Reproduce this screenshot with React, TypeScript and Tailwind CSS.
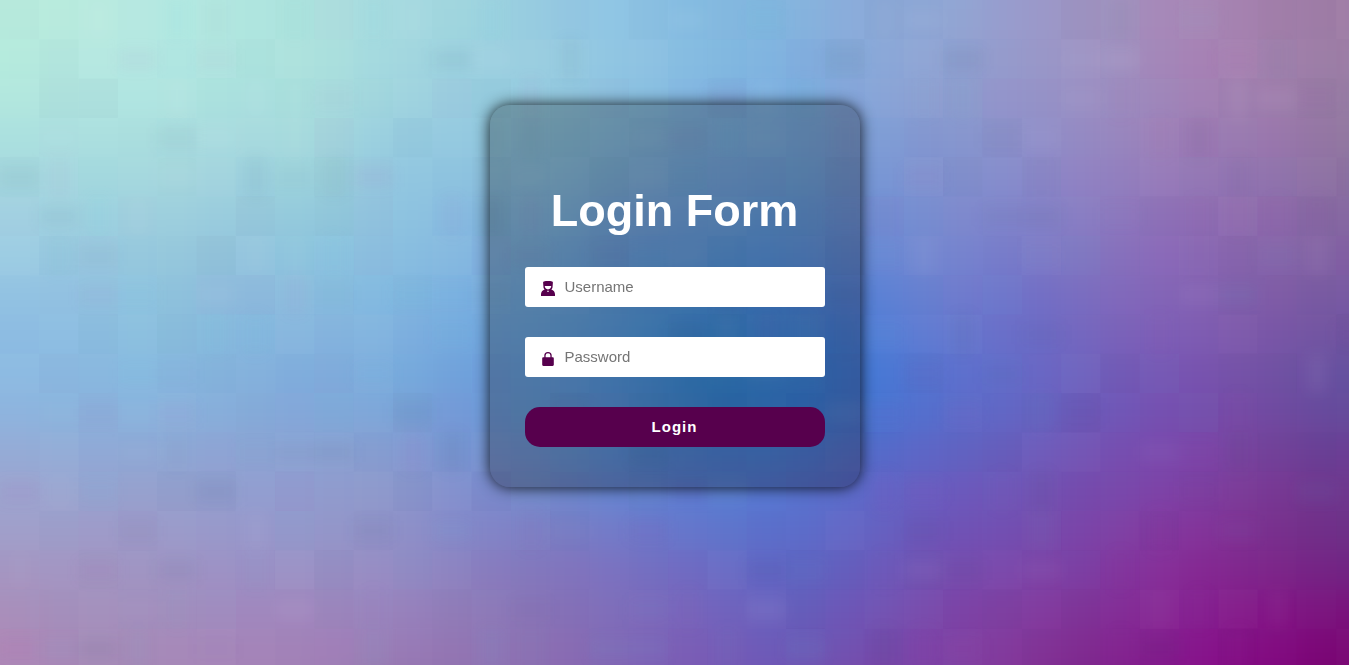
import React from "react";

/* Colour samples of the backdrop, one every two tiles in both directions. */
const SAMPLES: string[] = [
  "bdeee0 b9ecdc b6e9e2 b2e7e0 aee3de a7dae0 a3d7df 96c8e1 90c5e6 84bde0 82b5de 8cabd9 8ea8d6 9b9bcd a294bf a98bb8 a682ae 9f7aa4",
  "b6ecdc b4e7e2 b2e8e2 aee4df abe0dc a5d9df 99cfe0 9acfe0 8dc3e1 85b9e2 7aafe0 8aa9da 90a0d0 9798ca 9e90c2 a685b8 a580ae 997ea4",
  "a9dde0 a8dddf a8dbdd a4d7df a4d8dc 93c9e0 93c8e0 8dc4e2 82b8df 7aaee2 74aae0 7b9bd6 8494cf 8d8fcb 9588c2 9a7bb6 9876b0 8f749f",
  "a1d1e3 9dcde0 9accdd 96c7dd 90c8de 8cc2e0 86b8e1 7cb5e0 719fe2 679fe2 5d99e3 6d8ed6 7888ce 7d7fcb 8878bf 8e6ab8 8a68ab 8464a2",
  "8fbfe4 90c0e2 8ec3de 8abadf 88bade 82b6e0 75acdf 6aa6e2 589fe3 4494e4 4589e4 547fd8 6a7dd1 6c6dc8 7b68bc 8462b6 7e5aa8 7556a0",
  "8bb9e2 87b7e0 86b8e0 83afdb 7eaadd 76aadc 6e9cda 629ee0 5198e2 3089d5 3085e0 3f79d6 5570ce 636bc8 6d5bba 7550b2 7350a6 604f9e",
  "9aa6d2 94a8d4 93a4d2 91a2d2 8f9fd0 8c9acd 7b90d2 6f92d0 5d8bd8 5580d5 547bd5 5d6bc9 6561c3 6d58b8 774cae 7b46aa 7a3e98 6d3a90",
  "a09bc6 a299c6 9f98c6 9996ca 9694c8 928fc6 8583c4 8178c0 7674c4 666fc8 5c6bc8 6560c0 7350b4 774aad 7c40a4 8a3099 7b2c8c 6f2d86",
  "b089b5 a58fbb a58bb8 a586bc a384ba 9c80bb 9378b5 8b72b4 8068b8 7960b8 685dbb 7252b3 7c42a5 853a9d 842c94 861f90 861086 7c0a78",
  "ab88b8 a885b5 a585b5 a583b5 a080b5 9570a8 926fb0 8b66b0 7d5db2 7655b2 7250b2 7c40a2 7a40a5 842f94 7d1c88 850d8a 850080 700068",
];

type Rgb = [number, number, number];

const GRID: Rgb[][] = SAMPLES.map((row) =>
  row.split(" ").map((hex) => {
    const n = parseInt(hex, 16);
    return [n >> 16, (n >> 8) & 255, n & 255] as Rgb;
  }),
);

const TILE = 39.3;
const clamp = (v: number, max: number) => Math.min(Math.max(v, 0), max);

function colourAt(gx: number, gy: number): string {
  const x = clamp(gx, GRID[0].length - 1);
  const y = clamp(gy, GRID.length - 1);
  const x0 = Math.floor(x);
  const y0 = Math.floor(y);
  const x1 = clamp(x0 + 1, GRID[0].length - 1);
  const y1 = clamp(y0 + 1, GRID.length - 1);
  const mix = [0, 1, 2].map((i) => {
    const top = GRID[y0][x0][i] * (1 - (x - x0)) + GRID[y0][x1][i] * (x - x0);
    const low = GRID[y1][x0][i] * (1 - (x - x0)) + GRID[y1][x1][i] * (x - x0);
    return Math.round(top * (1 - (y - y0)) + low * (y - y0));
  });
  return `rgb(${mix.join(",")})`;
}

function noise(a: number, b: number, seed: number): number {
  const v = Math.sin(a * 127.1 + b * 311.7 + seed * 74.7) * 43758.5453;
  return v - Math.floor(v);
}

const TINTS = ["#ffffff", "#16365c", "#5fd0e0", "#b03fae"];

function Backdrop() {
  const base: React.ReactElement[] = [];
  const tiles: React.ReactElement[] = [];
  const smudges: React.ReactElement[] = [];
  for (let r = -2; r < 20; r++) {
    for (let c = -2; c < 37; c++) {
      base.push(
        <rect
          key={`${r}:${c}`}
          x={c * TILE}
          y={r * TILE}
          width={TILE + 1}
          height={TILE + 1}
          fill={colourAt((c + 0.5) / 2, (r + 0.5) / 2)}
        />,
      );
      if (r < 0 || c < 0 || r > 16 || c > 34) continue;
      tiles.push(
        <rect
          key={`${r}:${c}`}
          x={c * TILE}
          y={r * TILE}
          width={TILE}
          height={TILE}
          fill={TINTS[Math.floor(noise(c, r, 1) * 4)]}
          opacity={noise(c, r, 2) * 0.025}
        />,
      );
      if (noise(c, r, 3) > 0.6) {
        const tall = noise(c, r, 4) > 0.5;
        smudges.push(
          <rect
            key={`${r}:${c}`}
            x={c * TILE + (tall ? 10 : 0)}
            y={r * TILE + (tall ? 0 : 10)}
            width={tall ? 20 : TILE}
            height={tall ? TILE : 20}
            fill={TINTS[Math.floor(noise(c, r, 5) * 4)]}
            opacity={0.02 + noise(c, r, 6) * 0.04}
          />,
        );
      }
    }
  }
  return (
    <svg
      className="absolute inset-0 h-full w-full"
      viewBox="0 0 1349 665"
      preserveAspectRatio="none"
      aria-hidden="true"
    >
      <defs>
        <filter id="melt" x="-5%" y="-5%" width="110%" height="110%" colorInterpolationFilters="sRGB">
          <feGaussianBlur stdDeviation="14" />
        </filter>
        <filter id="soften" x="-5%" y="-5%" width="110%" height="110%" colorInterpolationFilters="sRGB">
          <feGaussianBlur stdDeviation="7" />
        </filter>
      </defs>
      <g filter="url(#melt)">{base}</g>
      <g filter="url(#soften)">{smudges}</g>
      <g>{tiles}</g>
    </svg>
  );
}

function UserIcon() {
  return (
    <svg className="h-5 w-3.5 shrink-0 text-[#57004d]" viewBox="0 0 14 20" fill="currentColor" aria-hidden="true">
      <path
        fillRule="evenodd"
        d="M2.800 4.500C4 4.100 5.500 4 7 4s3 .1 4.200.5c.6.200.8.700.7 1.300L11.600 9.500c0 1.300-.5 2.300-1.300 3 2.300.7 3.700 2.500 3.700 4.700V19H0v-1.800c0-2.200 1.400-4 3.700-4.700-.8-.7-1.300-1.700-1.300-3L2.100 5.800c-.1-.6.1-1.100.7-1.300zM3.800 9h6.400c0 1.200-.5 2.200-1.400 2.700L7 12.500l-1.800-.8C4.300 11.200 3.800 10.200 3.800 9zM6.200 13.900L7 13.500l.8.400-.3 1.200h-1l-.3-1.200z"
      />
    </svg>
  );
}

function LockIcon() {
  return (
    <svg className="h-5 w-3.5 shrink-0 text-[#57004d]" viewBox="0 0 14 20" fill="currentColor" aria-hidden="true">
      <path d="M3.300 10.200V8.600a3.700 3.700 0 0 1 7.400 0v1.600h.9c.7 0 1.200.5 1.200 1.200v6.400c0 .7-.5 1.200-1.200 1.200H2.400c-.7 0-1.200-.5-1.200-1.200v-6.400c0-.7.5-1.200 1.200-1.200h.9zm1.300 0h4.800V8.600a2.400 2.400 0 0 0-4.800 0v1.600z" />
    </svg>
  );
}

interface FieldProps {
  id: string;
  type: string;
  label: string;
  icon: React.ReactNode;
}

function Field({ id, type, label, icon }: FieldProps) {
  return (
    <label htmlFor={id} className="flex h-10 items-center gap-2.5 rounded-[3px] bg-white px-4">
      {icon}
      <input
        id={id}
        name={id}
        type={type}
        placeholder={label}
        aria-label={label}
        className="min-w-0 flex-1 bg-transparent text-[15px] text-black outline-none placeholder:text-[#757575]"
      />
    </label>
  );
}

export default function App() {
  return (
    <div className="bg-white pr-0.5 font-['Liberation_Sans',Arial,sans-serif]">
      <main className="relative min-h-screen overflow-hidden px-4 py-[105px]">
        <Backdrop />
        <form
          className="relative mx-auto flex w-full max-w-[370px] flex-col gap-[30px] rounded-[20px] bg-black/25 px-[35px] pt-20 pb-10 shadow-[0_0_15px_#000000e0]"
          onSubmit={(event) => event.preventDefault()}
        >
          <h1 className="text-center text-[45px] leading-[52px] font-bold text-white">Login Form</h1>
          <Field id="username" type="text" label="Username" icon={<UserIcon />} />
          <Field id="password" type="password" label="Password" icon={<LockIcon />} />
          <button
            type="submit"
            className="h-10 rounded-[15px] bg-[#57004d] text-[15px] font-bold tracking-[1px] text-white"
          >
            Login
          </button>
        </form>
      </main>
    </div>
  );
}
